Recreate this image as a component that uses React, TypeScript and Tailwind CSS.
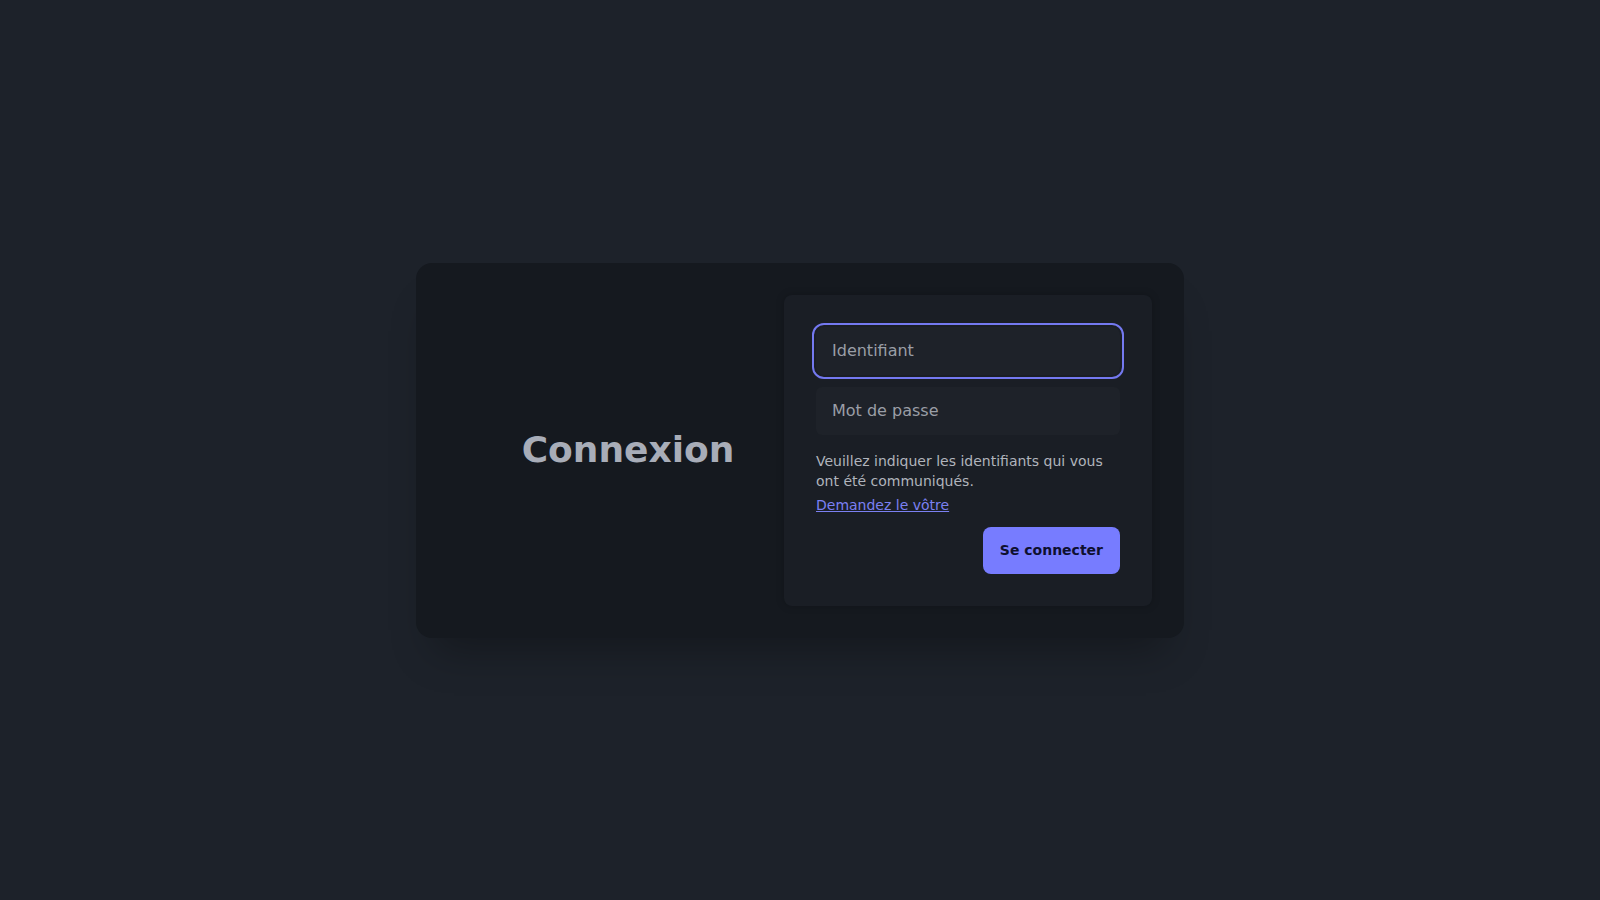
export default function App() {
  return (
    <div
      className="flex min-h-screen items-center justify-center bg-[#1d222a]"
      style={{ fontFamily: '"DejaVu Sans", "Noto Sans", sans-serif' }}
    >
      <div className="flex w-[768px] rounded-2xl bg-[#15191f] p-8 shadow-[0_30px_40px_-18px_rgba(0,0,0,0.3)]">
        {/* Title */}
        <div className="flex flex-1 items-center justify-center pl-6">
          <h1 className="text-4xl font-bold text-[#a8adb8]">Connexion</h1>
        </div>

        {/* Form panel */}
        <div className="w-[368px] rounded-lg bg-[#1a1e25] p-8 shadow-[0_0_8px_rgba(0,0,0,0.2)]">
          <form className="flex flex-col" onSubmit={(e) => e.preventDefault()}>
            <input
              type="text"
              placeholder="Identifiant"
              className="h-12 rounded-lg bg-[#1e2229] px-4 text-base text-[#d0d3d9] placeholder:text-[#9a9ea6] outline-2 outline-offset-2 outline-[#7479f0] outline-solid"
            />
            <input
              type="password"
              placeholder="Mot de passe"
              className="mt-3 h-12 rounded-md bg-[#1e2229] px-4 text-base text-[#d0d3d9] placeholder:text-[#9a9ea6] outline-none"
            />
            <p className="mt-4 text-sm leading-5 text-[#b0b4bc]">
              Veuillez indiquer les identifiants qui vous ont été communiqués.
            </p>
            <a href="#" className="mt-1 self-start text-sm leading-5 text-[#7b80f2] underline">
              Demandez le vôtre
            </a>
            <div className="mt-3 flex justify-end">
              <button
                type="submit"
                className="h-[47px] rounded-lg bg-[#777cff] px-[17px] text-sm font-bold text-[#0e1030]"
              >
                Se connecter
              </button>
            </div>
          </form>
        </div>
      </div>
    </div>
  );
}
